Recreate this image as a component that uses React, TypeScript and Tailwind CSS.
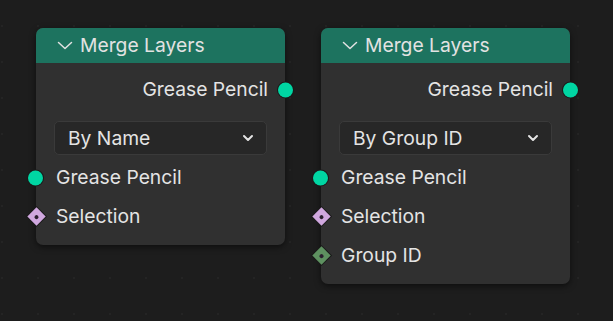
type Socket = "geo" | "bool" | "int";

const Chevron = ({ w, h, stroke }: { w: number; h: number; stroke: number }) => (
  <svg width={w} height={h} viewBox={`0 0 ${w} ${h}`} fill="none">
    <path
      d={`M${stroke} ${stroke} L${w / 2} ${h - stroke} L${w - stroke} ${stroke}`}
      stroke="currentColor"
      strokeWidth={stroke}
      strokeLinecap="round"
      strokeLinejoin="round"
    />
  </svg>
);

const SocketDot = ({ kind, side }: { kind: Socket; side: "left" | "right" }) => {
  const pos = side === "left" ? "-left-[8px]" : "-right-[8px]";
  if (kind === "geo") {
    return (
      <span
        className={`absolute ${pos} top-1/2 -translate-y-1/2 w-[15px] h-[15px] rounded-full bg-[#00d6a3] ring-1 ring-[#1a1a1a]`}
      />
    );
  }
  const color = kind === "bool" ? "bg-[#d0a8df]" : "bg-[#5e9160]";
  return (
    <span
      className={`absolute ${pos} top-1/2 -translate-y-1/2 w-[16px] h-[16px] flex items-center justify-center`}
    >
      <span
        className={`w-[13px] h-[13px] shrink-0 rotate-45 ${color} ring-1 ring-[#1a1a1a] flex items-center justify-center`}
      >
        <span className="w-[4px] h-[4px] rounded-full bg-[#2a1f2e]" />
      </span>
    </span>
  );
};

const InputRow = ({ label, kind }: { label: string; kind: Socket }) => (
  <div className="relative h-[39px] flex items-center pl-5">
    <SocketDot kind={kind} side="left" />
    <span>{label}</span>
  </div>
);

const MergeNode = ({ mode, groupId }: { mode: string; groupId?: boolean }) => (
  <div className="w-[249px] rounded-[7px] bg-[#303030] shadow-[0_2px_6px_rgba(0,0,0,0.55)]">
    <div className="h-[35px] rounded-t-[7px] bg-[#1d735f] flex items-center pl-[21px] gap-[7px] text-[#e2e2e2]">
      <Chevron w={16} h={9} stroke={1.5} />
      <span>Merge Layers</span>
    </div>
    <div className="pt-[7px] pb-[9px]">
      <div className="relative h-[39px] flex items-center justify-end pr-[17px]">
        <span>Grease Pencil</span>
        <SocketDot kind="geo" side="right" />
      </div>
      <div className="mx-[18px] mt-[12px] mb-[3px] h-[34px] rounded-[5px] bg-[#272727] border border-[#3a3a3a] flex items-center justify-between pl-[13px] pr-[12px]">
        <span>{mode}</span>
        <Chevron w={12} h={8} stroke={2} />
      </div>
      <InputRow label="Grease Pencil" kind="geo" />
      <InputRow label="Selection" kind="bool" />
      {groupId && <InputRow label="Group ID" kind="int" />}
    </div>
  </div>
);

export default function App() {
  return (
    <main
      className="w-[613px] h-[321px] overflow-hidden bg-[#1d1d1d] bg-[radial-gradient(circle,#242424_1px,transparent_1.5px)] bg-[size:36px_36px] bg-[position:-16px_8px] flex items-start gap-[36px] pl-[36px] pt-[28px] text-[19.3px] text-[#e4e4e4]"
      style={{ fontFamily: "Inter, 'Noto Sans', sans-serif" }}
    >
      <MergeNode mode="By Name" />
      <div className="w-[250px]">
        <MergeNode mode="By Group ID" groupId />
      </div>
    </main>
  );
}
